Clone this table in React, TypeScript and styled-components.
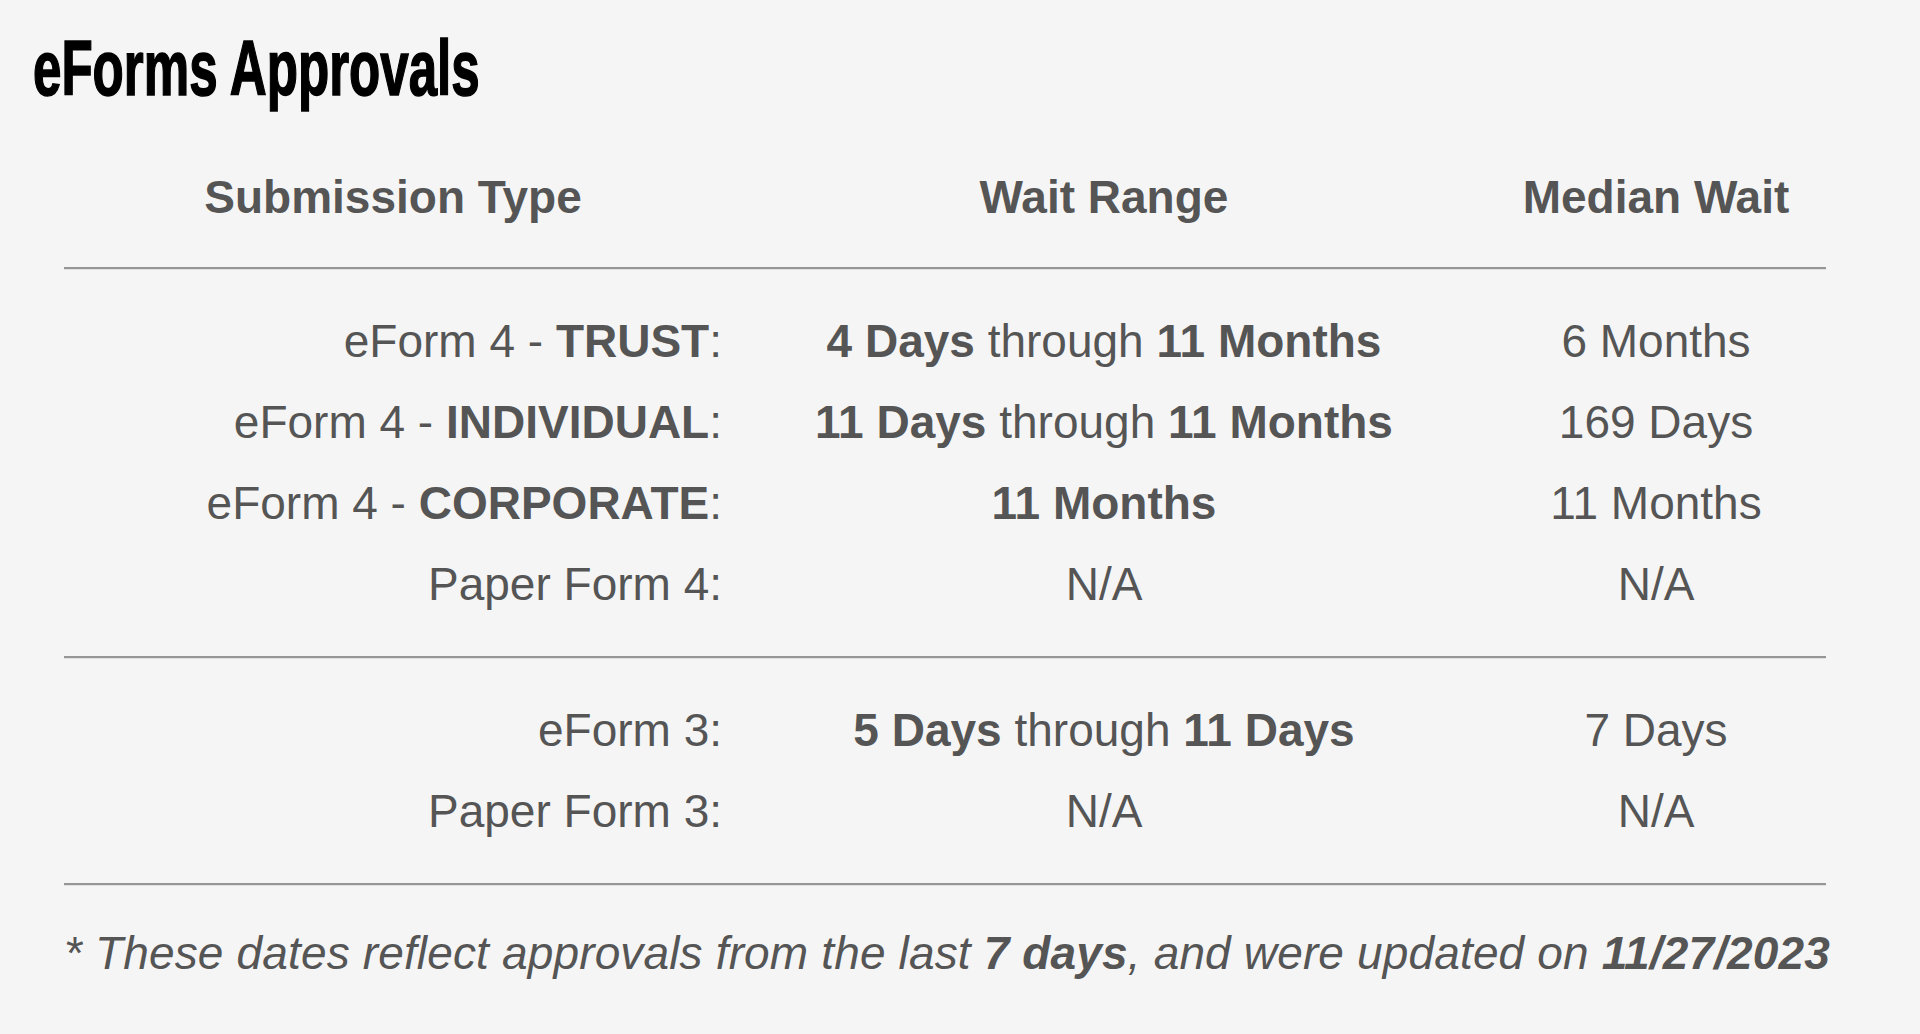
import React from 'react';
import styled, { createGlobalStyle } from 'styled-components';

const GlobalStyle = createGlobalStyle`
  html, body {
    margin: 0;
    padding: 0;
    background: #f5f5f5;
  }
  body {
    font-family: "Liberation Sans", Arial, Helvetica, sans-serif;
    color: #555;
  }
`;

const Page = styled.div`
  min-height: 1034px;
  padding: 29px 33px 0;
  box-sizing: border-box;
  background: #f5f5f5;
`;

// condensed display face, squeezed from the bold sans
const Title = styled.h1`
  display: inline-block;
  margin: 0;
  font-size: 78px;
  line-height: 78px;
  font-weight: 700;
  color: #000;
  -webkit-text-stroke: 1.6px #000;
  transform: scaleX(0.655);
  transform-origin: left center;
  white-space: nowrap;
`;

const Table = styled.div`
  width: 1762px;
  margin: 50px 0 0 31px;
`;

const Row = styled.div<{ $header?: boolean }>`
  display: grid;
  grid-template-columns: 658px 764px 340px;
  height: 81px;
  align-items: center;
  font-size: 46px;
  line-height: 81px;
  font-weight: ${({ $header }) => ($header ? 700 : 400)};
  white-space: nowrap;
`;

const Cell = styled.div<{ $align?: 'left' | 'center' | 'right' }>`
  text-align: ${({ $align }) => $align || 'center'};
`;

const Divider = styled.div`
  height: 2px;
  background: #969696;
  border-bottom: 1px solid #e0e0e0;
`;

const HeaderDivider = styled(Divider)`
  margin-top: 29px;
`;

const Group = styled.div`
  padding: 31px 0;
`;

const Note = styled.p`
  margin: 39px 0 0;
  font-size: 46px;
  line-height: 56px;
  font-style: italic;
  letter-spacing: 0.15px;
  white-space: nowrap;
`;

type Entry = {
  label: React.ReactNode;
  range: React.ReactNode;
  median: string;
};

const formFour: Entry[] = [
  {
    label: <>eForm 4 - <b>TRUST</b>:</>,
    range: <><b>4 Days</b> through <b>11 Months</b></>,
    median: '6 Months',
  },
  {
    label: <>eForm 4 - <b>INDIVIDUAL</b>:</>,
    range: <><b>11 Days</b> through <b>11 Months</b></>,
    median: '169 Days',
  },
  {
    label: <>eForm 4 - <b>CORPORATE</b>:</>,
    range: <b>11 Months</b>,
    median: '11 Months',
  },
  { label: 'Paper Form 4:', range: 'N/A', median: 'N/A' },
];

const formThree: Entry[] = [
  {
    label: 'eForm 3:',
    range: <><b>5 Days</b> through <b>11 Days</b></>,
    median: '7 Days',
  },
  { label: 'Paper Form 3:', range: 'N/A', median: 'N/A' },
];

const EntryRows: React.FC<{ entries: Entry[] }> = ({ entries }) => (
  <Group>
    {entries.map((e, i) => (
      <Row key={i}>
        <Cell $align="right">{e.label}</Cell>
        <Cell>{e.range}</Cell>
        <Cell>{e.median}</Cell>
      </Row>
    ))}
  </Group>
);

const App: React.FC = () => {
  return (
    <>
      <GlobalStyle />
      <Page>
        <Title>eForms Approvals</Title>
        <Table>
          <Row $header>
            <Cell>Submission Type</Cell>
            <Cell>Wait Range</Cell>
            <Cell>Median Wait</Cell>
          </Row>
          <HeaderDivider />
          <EntryRows entries={formFour} />
          <Divider />
          <EntryRows entries={formThree} />
          <Divider />
          <Note>
            * These dates reflect approvals from the last <b>7 days</b>, and were
            updated on <b>11/27/2023</b>
          </Note>
        </Table>
      </Page>
    </>
  );
};

export default App;
